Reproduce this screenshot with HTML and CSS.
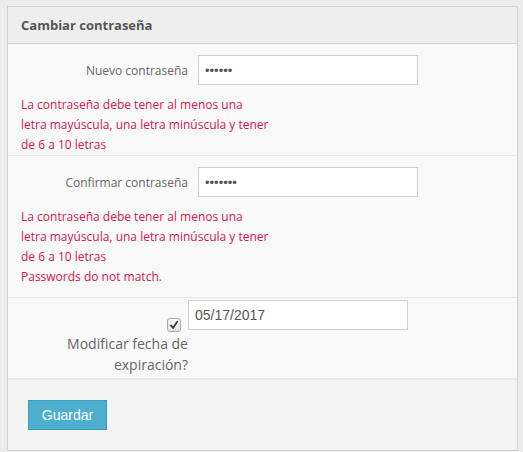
FILE: index.html
```html
<!DOCTYPE html>
<html lang="es">
<head>
<meta charset="utf-8">
<title>Cambiar contraseña</title>
<link rel="stylesheet" href="styles.css">
</head>
<body>
<div class="panel">
  <div class="panel-heading">Cambiar contraseña</div>
  <div class="panel-body">
    <div class="group">
      <div class="row">
        <label class="label">Nuevo contraseña</label>
        <input class="field pw" type="password" value="abcdef">
      </div>
      <div class="errors">
        <div class="err">La contraseña debe tener al menos una letra mayúscula, una letra minúscula y tener de 6 a 10 letras</div>
      </div>
    </div>
    <div class="group group-2">
      <div class="row">
        <label class="label">Confirmar contraseña</label>
        <input class="field pw" type="password" value="abcdefg">
      </div>
      <div class="errors">
        <div class="err">La contraseña debe tener al menos una letra mayúscula, una letra minúscula y tener de 6 a 10 letras</div>
        <div class="err-line">Passwords do not match.</div>
      </div>
    </div>
    <div class="group group-3">
      <div class="row row-top">
        <label class="label label-check">
          <span class="check"><svg width="10" height="10" viewBox="0 0 10 10"><path d="M2 5.4 L4.1 8 L8.2 1.6" fill="none" stroke="#333" stroke-width="1.7" stroke-linecap="round" stroke-linejoin="round"/></svg></span>
          <span class="check-text">Modificar fecha de expiración?</span>
        </label>
        <input class="field date" type="text" value="05/17/2017">
      </div>
    </div>
  </div>
  <div class="panel-footer">
    <button class="btn" type="button">Guardar</button>
  </div>
</div>
</body>
</html>
```
FILE: styles.css
```css
html, body {
  margin: 0;
  padding: 0;
}
body {
  background: #ececec;
  font-family: "Open Sans", "Liberation Sans", sans-serif;
  color: #555;
}
.panel {
  margin: 6px 0 0 7px;
  width: 509px;
  border: 1px solid #d2d2d2;
  background: #f9f9f9;
}
.panel-heading {
  height: 36px;
  line-height: 36px;
  padding: 0 13px;
  background: #eeeeee;
  border-bottom: 1px solid #d2d2d2;
  font-size: 13px;
  font-weight: bold;
  color: #555;
}
.group {
  padding-top: 11px;
  border-bottom: 1px solid #e8e8e8;
}
.group-2 {
  padding-bottom: 10px;
}
.group-3 {
  padding-top: 2px;
  padding-bottom: 3px;
  border-bottom: 2px solid #e6e6e6;
}
.row {
  display: flex;
  align-items: center;
}
.row-top {
  align-items: flex-start;
}
.label {
  width: 180px;
  text-align: right;
  font-size: 12px;
  color: #666;
}
.field {
  box-sizing: border-box;
  width: 220px;
  height: 30px;
  margin: 0 0 0 10px;
  padding: 0 6px;
  border: 1px solid #cfcfcf;
  background: #fff;
  outline: none;
}
.pw {
  font-family: "Liberation Sans", sans-serif;
  font-size: 13px;
  color: #555;
}
.date {
  margin-left: 0;
  font-family: "Liberation Sans", sans-serif;
  font-size: 14px;
  color: #555;
}
.errors {
  padding: 10px 0 0 13px;
  font-size: 12px;
  line-height: 20px;
  color: #d1174d;
}
.err {
  width: 250px;
}
.label-check {
  display: flex;
  flex-direction: column;
  align-items: flex-end;
  padding-top: 18px;
  font-size: 14px;
  line-height: 20.5px;
  color: #666;
}
.check {
  box-sizing: border-box;
  width: 14px;
  height: 14px;
  margin-right: 7px;
  margin-bottom: 2px;
  border: 1px solid #a9a9a9;
  border-radius: 3px;
  background: linear-gradient(#fafafa, #e4e4e4);
  display: flex;
  align-items: center;
  justify-content: center;
}
.check svg {
  display: block;
}
.check-text {
  width: 130px;
}
.panel-footer {
  background: #f4f4f4;
  padding: 20px;
}
.btn {
  display: block;
  box-sizing: border-box;
  width: 79px;
  height: 30px;
  padding: 0;
  border: 1px solid #3b9dbb;
  border-radius: 0;
  background: #4bafcd;
  color: #fff;
  font-family: "Liberation Sans", Arial, sans-serif;
  font-size: 14px;
}
```
